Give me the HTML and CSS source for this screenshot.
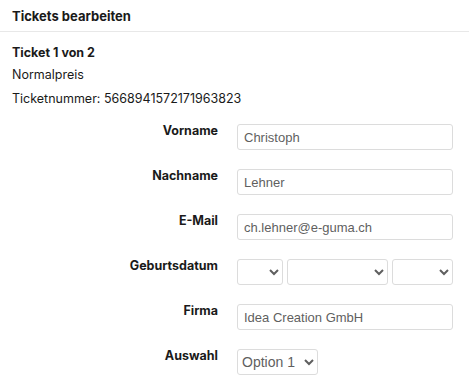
FILE: index.html
```html
<!DOCTYPE html>
<html>
<head>
    <title>Tickets bearbeiten</title>
    <link rel="stylesheet" href="styles.css">
</head>
<body>
    <div class="panel">
        <div class="panel-header">
            <h2>Tickets bearbeiten</h2>
        </div>
        <div class="panel-body">
            <h3>Ticket 1 von 2</h3>
            <p class="price">Normalpreis</p>
            <p class="number">Ticketnummer: 5668941572171963823</p>
            <form class="ticket-form">
                <label for="vorname">Vorname</label>
                <input type="text" id="vorname" value="Christoph">

                <label for="nachname">Nachname</label>
                <input type="text" id="nachname" value="Lehner">

                <label for="email">E-Mail</label>
                <input type="text" id="email" value="ch.lehner@e-guma.ch">

                <label>Geburtsdatum</label>
                <div class="date-row">
                    <select class="day"><option></option></select>
                    <select class="month"><option></option></select>
                    <select class="year"><option></option></select>
                </div>

                <label for="firma">Firma</label>
                <input type="text" id="firma" value="Idea Creation GmbH">

                <label for="auswahl">Auswahl</label>
                <div>
                    <select id="auswahl" class="choice"><option>Option 1</option></select>
                </div>
            </form>
        </div>
    </div>
</body>
</html>
```

FILE: styles.css
```css
body {
    margin: 0;
    font-family: Inter, 'Noto Sans', sans-serif;
    background: #fff;
    color: #1a1a1a;
}
.panel-header {
    height: 31px;
    padding: 0 12px;
    display: flex;
    align-items: center;
    border-bottom: 1px solid #e8e8e8;
}
.panel-header h2 {
    margin: 0;
    font-size: 13px;
    font-weight: 700;
}
.panel-body {
    padding: 12px 16px 0 12px;
}
.panel-body h3 {
    margin: 0;
    font-size: 12.5px;
    font-weight: 700;
    line-height: 18px;
}
.price {
    margin: 4px 0 0;
    font-size: 12.5px;
    line-height: 18px;
}
.number {
    margin: 6px 0 0;
    font-size: 12.5px;
    line-height: 18px;
}
.ticket-form {
    display: grid;
    grid-template-columns: 206px 1fr;
    column-gap: 19px;
    row-gap: 19px;
    margin-top: 16px;
}
.ticket-form label {
    text-align: right;
    font-size: 12.5px;
    font-weight: 700;
    line-height: 14px;
}
.ticket-form input,
.ticket-form select {
    box-sizing: border-box;
    height: 26px;
    border: 1px solid #dcdcdc;
    border-radius: 3px;
    font-family: 'Liberation Sans', Arial, sans-serif;
    font-size: 13px;
    color: #5f5f5f;
    background: #fff;
    margin: 0;
}
.ticket-form input {
    width: 100%;
    padding: 0 6px;
    outline: none;
}
.ticket-form select {
    font-size: 14px;
}
.date-row {
    display: flex;
    gap: 4px;
}
.day { width: 46px; }
.month { width: 101px; }
.year { width: 61px; }
.choice { width: 81px; }
```
